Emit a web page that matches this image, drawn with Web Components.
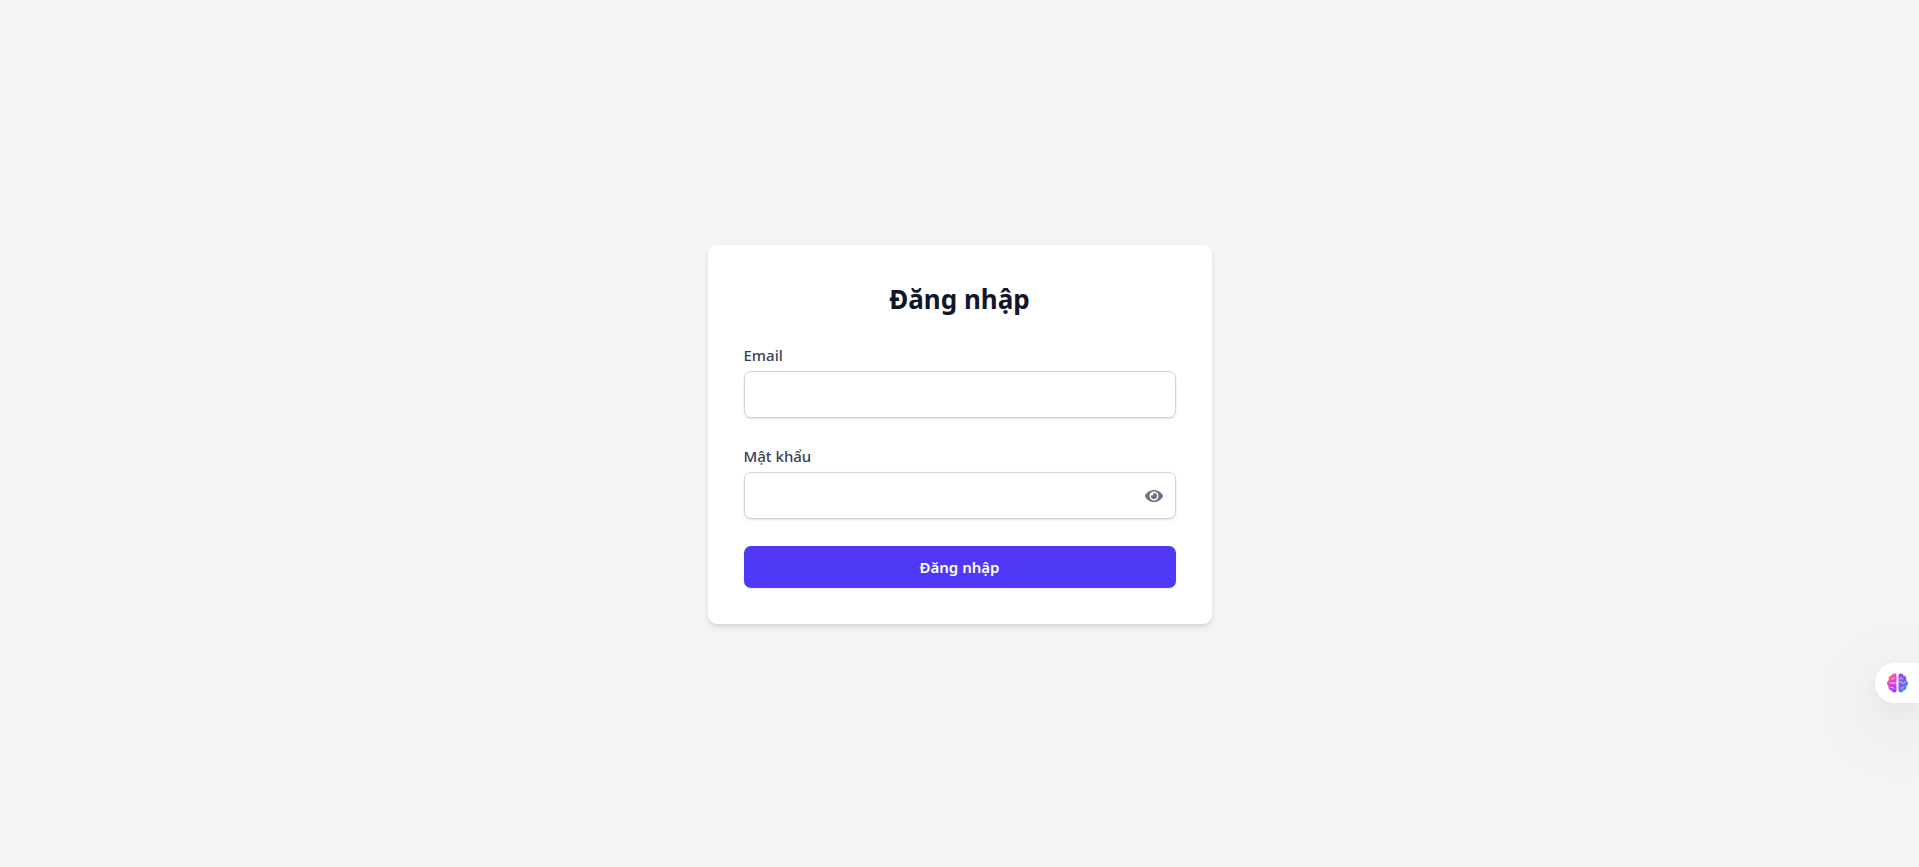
<!DOCTYPE html>
<html lang="vi">
<head>
<meta charset="utf-8">
<meta name="viewport" content="width=device-width, initial-scale=1">
<title>Đăng nhập</title>
<style>
  body { margin: 0; background: #f3f4f6; font-family: "Noto Sans", "Open Sans", sans-serif; overflow-x: hidden; }
</style>
</head>
<body>
<login-page>
  <login-card heading="Đăng nhập">
    <text-field label="Email" type="email"></text-field>
    <text-field label="Mật khẩu" type="password" reveal></text-field>
    <submit-button>Đăng nhập</submit-button>
  </login-card>
  <assistant-tab slot="overlay"></assistant-tab>
</login-page>

<script>
class BaseElement extends HTMLElement {
  render(html) {
    const t = document.createElement('template');
    t.innerHTML = html;
    this.attachShadow({ mode: 'open' }).append(t.content.cloneNode(true));
  }
}

customElements.define('login-page', class extends BaseElement {
  connectedCallback() {
    this.render(`
      <style>
        :host { display: block; }
        main { box-sizing: border-box; min-height: 100vh; display: flex; align-items: center; justify-content: center; padding-top: 2px; }
      </style>
      <main><slot></slot></main>
      <slot name="overlay"></slot>`);
  }
});

customElements.define('login-card', class extends BaseElement {
  connectedCallback() {
    this.render(`
      <style>
        :host { display: block; box-sizing: border-box; width: 100%; max-width: 504px; padding: 36px;
          background: #fff; border-radius: 9px;
          box-shadow: 0 4px 6px -1px rgb(0 0 0 / .1), 0 2px 4px -2px rgb(0 0 0 / .1); }
        h2 { margin: 0 0 27px; font-size: 26px; line-height: 36px; font-weight: 700; text-align: center; color: #101828; }
        form { display: flex; flex-direction: column; gap: 27px; }
      </style>
      <h2></h2>
      <form><slot></slot></form>`);
    this.shadowRoot.querySelector('h2').textContent = this.getAttribute('heading');
  }
});

customElements.define('text-field', class extends BaseElement {
  connectedCallback() {
    this.render(`
      <style>
        :host { display: flex; flex-direction: column; gap: 5px; }
        label { font-size: 15px; line-height: 22px; font-weight: 500; color: #364153; }
        .box { display: flex; align-items: center; box-sizing: border-box; height: 47px; padding: 0 12px;
          border: 1px solid #d1d5dc; border-radius: 7px; background: #fff;
          box-shadow: 0 1px 3px rgb(0 0 0 / .1), 0 1px 2px -1px rgb(0 0 0 / .1); }
        .box:focus-within { border-color: #4f39f6; }
        input { flex: 1; min-width: 0; border: 0; outline: 0; padding: 0; background: none; font: inherit; font-size: 16px; color: #101828; }
        button { display: flex; border: 0; padding: 0; background: none; color: #6a7282; cursor: pointer; }
        svg { width: 18px; height: 18px; }
      </style>
      <label for="field"></label>
      <div class="box"><input id="field"></div>`);
    const root = this.shadowRoot;
    const input = root.querySelector('input');
    root.querySelector('label').textContent = this.getAttribute('label');
    input.type = this.getAttribute('type');
    if (this.hasAttribute('reveal')) {
      const button = document.createElement('button');
      button.type = 'button';
      button.setAttribute('aria-label', 'Hiện mật khẩu');
      button.innerHTML = `<svg viewBox="0 0 576 512" fill="currentColor" aria-hidden="true"><path d="M572.52 241.4C518.29 135.59 410.93 64 288 64S57.68 135.64 3.48 241.41a32.35 32.35 0 0 0 0 29.19C57.71 376.41 165.07 448 288 448s230.32-71.64 284.52-177.41a32.35 32.35 0 0 0 0-29.19zM288 400a144 144 0 1 1 144-144 143.93 143.93 0 0 1-144 144zm0-240a95.31 95.31 0 0 0-25.31 3.79 47.85 47.85 0 0 1-66.9 66.9A95.78 95.78 0 1 0 288 160z"/></svg>`;
      button.addEventListener('click', () => { input.type = input.type === 'password' ? 'text' : 'password'; });
      root.querySelector('.box').append(button);
    }
  }
});

customElements.define('submit-button', class extends BaseElement {
  connectedCallback() {
    this.render(`
      <style>
        :host { display: block; }
        button { width: 100%; height: 42px; border: 0; padding: 0 16px; border-radius: 7px; background: #4f39f6; color: #fff;
          font: inherit; font-size: 15px; line-height: 22px; font-weight: 600; cursor: pointer;
          box-shadow: 0 1px 2px rgb(0 0 0 / .08); }
      </style>
      <button type="button"><slot></slot></button>`);
  }
});

customElements.define('assistant-tab', class extends BaseElement {
  connectedCallback() {
    this.render(`
      <style>
        :host { position: fixed; right: 0; bottom: 164px; }
        button { box-sizing: border-box; display: flex; align-items: center; width: 44px; height: 40px; padding: 0 0 0 12px;
          border: 0; border-radius: 20px 0 0 20px; background: #fff; cursor: pointer;
          box-shadow: 0 20px 80px rgb(0 0 0 / .14), 0 8px 28px rgb(0 0 0 / .05); }
        svg { width: 21px; height: 20px; }
      </style>
      <button type="button" aria-label="Trợ lý AI">
        <svg viewBox="0 0 42 40" aria-hidden="true">
          <defs>
            <linearGradient id="warm" x1="0.2" y1="0" x2="0.8" y2="1">
              <stop offset="0" stop-color="#ff9a2e"/><stop offset=".4" stop-color="#f03cc4"/><stop offset=".7" stop-color="#c244f4"/><stop offset="1" stop-color="#6a50ff"/>
            </linearGradient>
            <linearGradient id="cool" x1="0.2" y1="0" x2="0.8" y2="1">
              <stop offset="0" stop-color="#a146f4"/><stop offset=".5" stop-color="#7a5cf6"/><stop offset="1" stop-color="#2aa6ff"/>
            </linearGradient>
          </defs>
          <path fill="url(#warm)" d="M19 4C18 0 10 0 9 5C4 5 2 10 4 14C-1 17-1 23 3 26C2 31 5 35 9 35C11 40 18 40 19 36Z"/>
          <path fill="url(#cool)" d="M23 4C24 0 32 0 33 5C38 5 40 10 38 14C43 17 43 23 39 26C40 31 37 35 33 35C31 40 24 40 23 36Z"/>
          <g fill="none" stroke="#fff" stroke-opacity=".7" stroke-width="2" stroke-linecap="round">
            <path d="M10 12H13L15 9M6 20H19M8 29H12L14 31"/>
            <path d="M26 12L29 9L31 12M25 18H29L33 21L37 17M28 29L30 31L33 28"/>
          </g>
        </svg>
      </button>`);
  }
});
</script>
</body>
</html>
